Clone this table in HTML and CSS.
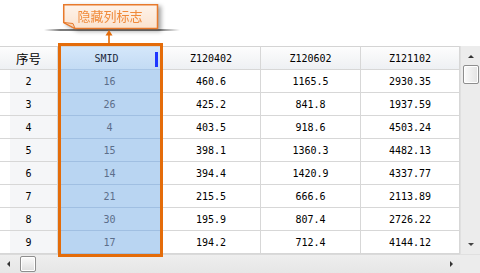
FILE: index.html
```html
<!DOCTYPE html>
<html lang="zh">
<head>
<meta charset="utf-8">
<link rel="stylesheet" href="styles.css">
</head>
<body>
<div class="top">
  <div class="shelf"></div>
  <div class="callout">
    <svg class="callout-bg" width="98" height="27" viewBox="0 0 98 27">
      <defs>
        <linearGradient id="cg" x1="0" y1="0" x2="0" y2="1">
          <stop offset="0" stop-color="#fef3ea"/>
          <stop offset="1" stop-color="#fbe3cf"/>
        </linearGradient>
      </defs>
      <path d="M0.75 0.75 H94.5 V24.5 H12 L0.75 18.5 Z" fill="url(#cg)" stroke="#e87a2c" stroke-width="1.5"/>
      <path d="M0.75 18.5 L10 19.5 L12 24.5 Z" fill="#f7d3b5" stroke="#e87a2c" stroke-width="1"/>
    </svg>
    <span class="callout-text">隐藏列标志</span>
  </div>
  <svg class="arrow" width="10" height="16" viewBox="0 0 10 16">
    <path d="M5 3 V16" stroke="#e46c0a" stroke-width="1.6"/>
    <path d="M1.5 6.5 L5 1 L8.5 6.5 Z" fill="#e46c0a"/>
  </svg>
</div>
<div class="main">
  <div class="grid">
    <div class="hd c1">序号</div>
    <div class="hd sel">SMID<span class="marker"></span></div>
    <div class="hd">Z120402</div>
    <div class="hd">Z120602</div>
    <div class="hd">Z121102</div>

    <div class="rh">2</div><div class="sc">16</div><div class="dc">460.6</div><div class="dc">1165.5</div><div class="dc">2930.35</div>
    <div class="rh">3</div><div class="sc">26</div><div class="dc">425.2</div><div class="dc">841.8</div><div class="dc">1937.59</div>
    <div class="rh">4</div><div class="sc">4</div><div class="dc">403.5</div><div class="dc">918.6</div><div class="dc">4503.24</div>
    <div class="rh">5</div><div class="sc">15</div><div class="dc">398.1</div><div class="dc">1360.3</div><div class="dc">4482.13</div>
    <div class="rh">6</div><div class="sc">14</div><div class="dc">394.4</div><div class="dc">1420.9</div><div class="dc">4337.77</div>
    <div class="rh">7</div><div class="sc">21</div><div class="dc">215.5</div><div class="dc">666.6</div><div class="dc">2113.89</div>
    <div class="rh">8</div><div class="sc">30</div><div class="dc">195.9</div><div class="dc">807.4</div><div class="dc">2726.22</div>
    <div class="rh">9</div><div class="sc">17</div><div class="dc">194.2</div><div class="dc">712.4</div><div class="dc">4144.12</div>
  </div>
  <div class="vscroll">
    <span class="tri up"></span>
    <span class="vthumb"></span>
    <span class="vspace"></span>
    <span class="tri down"></span>
  </div>
  <div class="highlight"></div>
</div>
<div class="bottom">
  <div class="hscroll">
    <span class="tri left"></span>
    <span class="hthumb"></span>
    <span class="hspace"></span>
    <span class="tri right"></span>
  </div>
  <div class="corner"></div>
</div>
</body>
</html>
```
FILE: styles.css
```css
* { box-sizing: border-box; }
html, body { margin: 0; padding: 0; }
body {
  width: 480px;
  height: 273px;
  overflow: hidden;
  background: #ffffff;
  font-family: "DejaVu Sans Mono", "Liberation Mono", monospace;
  font-size: 10px;
  color: #000;
}
.top {
  position: relative;
  height: 46px;
}
.shelf {
  position: absolute;
  left: 44px;
  top: 29px;
  width: 136px;
  height: 2px;
  background: linear-gradient(90deg, rgba(120,120,120,0) 0%, rgba(90,90,90,0.8) 12%, rgba(90,90,90,0.8) 85%, rgba(120,120,120,0) 100%);
}
.callout {
  position: absolute;
  left: 63px;
  top: 4px;
  width: 98px;
  height: 27px;
  display: flex;
  align-items: flex-start;
  justify-content: center;
  filter: drop-shadow(3px 2px 2px rgba(0,0,0,0.35));
}
.callout-bg {
  position: absolute;
  left: 0;
  top: 0;
}
.callout-text {
  position: relative;
  margin-top: 3px;
  margin-right: 4px;
  font-family: "Noto Sans CJK SC", sans-serif;
  font-size: 13px;
  line-height: 18px;
  color: #f08a3a;
}
.arrow {
  position: absolute;
  left: 104px;
  top: 29px;
}
.main {
  position: relative;
  display: flex;
}
.grid {
  display: grid;
  grid-template-columns: 58px 104px 99px 100px 99px;
  grid-auto-rows: 23px;
  grid-template-rows: 24px;
  width: 460px;
}
.grid > div {
  display: flex;
  align-items: center;
  justify-content: center;
  border-right: 1px solid #d7d7d7;
  border-bottom: 1px solid #d7d7d7;
  white-space: nowrap;
}
.hd {
  position: relative;
  border-top: 1px solid #d4d4d4;
  background: linear-gradient(#fdfdfd, #eef0f3);
}
.hd.c1 {
  font-family: "Noto Sans CJK SC", sans-serif;
  font-size: 12.5px;
}
.hd.sel {
  background: linear-gradient(#d4e7fa, #c3dbf4);
  border-right-color: #a9c6e6;
  border-bottom-color: #a9c6e6;
  color: #1c2a40;
  padding-right: 6px;
}
.marker {
  position: absolute;
  right: 3px;
  top: 5px;
  width: 3px;
  height: 15px;
  background: #1d37ff;
}
.rh {
  background: linear-gradient(90deg, #ffffff 0, #ffffff 10px, #f5f6f8 10px);
}
.sc {
  background: #b9d5f2;
  color: #5c6e8a;
  border-bottom-color: #a0bfe2 !important;
  border-right-color: #a0bfe2 !important;
}
.dc { background: #ffffff; }
.vscroll {
  width: 20px;
  display: flex;
  flex-direction: column;
  align-items: center;
  background: #ececec;
  border-left: 1px solid #e0e0e0;
  padding-top: 9px;
  padding-bottom: 8px;
}
.tri {
  width: 0;
  height: 0;
  border-style: solid;
}
.tri.up {
  border-width: 0 3px 3px 3px;
  border-color: transparent transparent #333 transparent;
}
.tri.down {
  border-width: 3px 3px 0 3px;
  border-color: #444 transparent transparent transparent;
}
.vthumb {
  margin-top: 7px;
  width: 16px;
  height: 19px;
  border: 1px solid #8e8e8e;
  border-radius: 2px;
  background: linear-gradient(90deg, #fbfbfb, #e3e3e3);
  box-shadow: inset 0 0 0 1px #ffffff;
}
.vspace { flex: 1; }
.highlight {
  position: absolute;
  left: 58px;
  top: -3px;
  width: 105px;
  height: 214px;
  border: 3px solid #e46c0a;
  pointer-events: none;
}
.bottom {
  display: flex;
  height: 19px;
}
.hscroll {
  width: 460px;
  display: flex;
  align-items: center;
  background: linear-gradient(#eeeeee, #e6e6e6);
  border-top: 1px solid #dadada;
  padding-left: 7px;
  padding-right: 7px;
}
.tri.left {
  border-width: 3px 3px 3px 0;
  border-color: transparent #333 transparent transparent;
}
.tri.right {
  border-width: 3px 0 3px 3px;
  border-color: transparent transparent transparent #333;
}
.hthumb {
  margin-left: 10px;
  width: 16px;
  height: 16px;
  border: 1px solid #8e8e8e;
  border-radius: 2px;
  background: linear-gradient(#fbfbfb, #dedede);
  box-shadow: inset 0 0 0 1px #ffffff;
}
.hspace { flex: 1; }
.corner {
  width: 20px;
  background: #ececec;
  border-top: 1px solid #e0e0e0;
}
```
